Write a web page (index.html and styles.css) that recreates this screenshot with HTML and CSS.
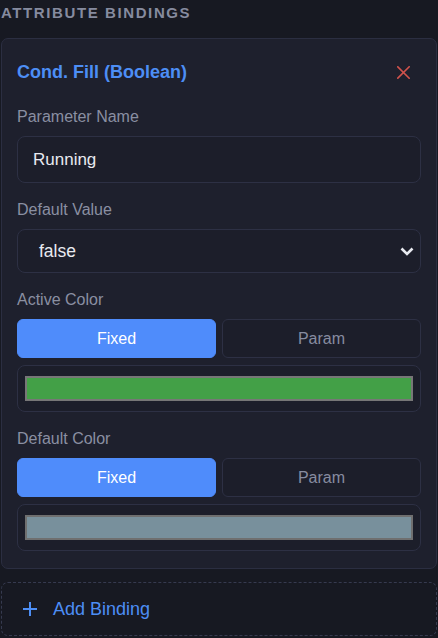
FILE: index.html
```html
<!DOCTYPE html>
<html lang="en">
<head>
<meta charset="utf-8">
<title>Attribute Bindings</title>
<link rel="stylesheet" href="styles.css">
</head>
<body>
<div class="panel">
  <h3 class="section-title">Attribute Bindings</h3>
  <div class="binding-card">
    <div class="card-header">
      <span class="card-title">Cond. Fill (Boolean)</span>
      <button class="remove-btn" aria-label="Remove binding">
        <svg width="13" height="13" viewBox="0 0 13 13"><path d="M0.8 0.8 L12.2 12.2 M12.2 0.8 L0.8 12.2" stroke="#d0524c" stroke-width="1.6" fill="none" stroke-linecap="square"/></svg>
      </button>
    </div>
    <div class="fields">
      <div class="field">
        <label class="field-label">Parameter Name</label>
        <div class="text-input">Running</div>
      </div>
      <div class="field">
        <label class="field-label">Default Value</label>
        <div class="select-input">
          <span>false</span>
          <svg width="14" height="9" viewBox="0 0 14 9"><path d="M1.5 1.5 L7 7 L12.5 1.5" stroke="#e8eaf0" stroke-width="2.6" fill="none"/></svg>
        </div>
      </div>
      <div class="field">
        <label class="field-label">Active Color</label>
        <div class="color-stack">
          <div class="toggle">
            <button class="toggle-btn active">Fixed</button>
            <button class="toggle-btn">Param</button>
          </div>
          <div class="swatch-box"><div class="swatch swatch-green"></div></div>
        </div>
      </div>
      <div class="field">
        <label class="field-label">Default Color</label>
        <div class="color-stack">
          <div class="toggle">
            <button class="toggle-btn active">Fixed</button>
            <button class="toggle-btn">Param</button>
          </div>
          <div class="swatch-box"><div class="swatch swatch-grey"></div></div>
        </div>
      </div>
    </div>
  </div>
  <button class="add-binding">
    <svg width="14" height="14" viewBox="0 0 14 14"><path d="M7 0 V14 M0 7 H14" stroke="#4d8ef5" stroke-width="2" fill="none"/></svg>
    <span>Add Binding</span>
  </button>
</div>
</body>
</html>
```
FILE: styles.css
```css
* { box-sizing: border-box; }
html, body {
  margin: 0;
  padding: 0;
  background: #171922;
  font-family: "Liberation Sans", Arial, sans-serif;
  overflow: hidden;
}
.panel {
  padding: 0 1px;
  width: 438px;
}
.section-title {
  margin: 0 0 16px 0;
  padding-top: 3px;
  font-size: 15px;
  line-height: 19px;
  font-weight: 700;
  letter-spacing: 1.6px;
  text-transform: uppercase;
  color: #868b9f;
}
.binding-card {
  width: 436px;
  background: #1e202d;
  border: 1px solid #2b2e41;
  border-radius: 7px;
  padding: 15px 15px 17px 15px;
}
.card-header {
  height: 36px;
  display: flex;
  align-items: center;
  justify-content: space-between;
  margin-bottom: 17px;
}
.card-title {
  color: #4d8ef5;
  font-size: 18px;
  font-weight: 700;
}
.remove-btn {
  width: 36px;
  height: 36px;
  border: 0;
  background: transparent;
  padding: 0;
  display: flex;
  align-items: center;
  justify-content: center;
}
.fields {
  display: flex;
  flex-direction: column;
  gap: 17px;
}
.field {
  display: flex;
  flex-direction: column;
}
.field-label {
  font-size: 16px;
  line-height: 20px;
  color: #8a8fa2;
  margin-bottom: 9px;
}
.text-input {
  height: 47px;
  border: 1px solid #2d3044;
  border-radius: 8px;
  background: #1c1e2a;
  padding: 0 15px;
  display: flex;
  align-items: center;
  color: #e8eaf0;
  font-size: 17px;
}
.select-input {
  height: 44px;
  border: 1px solid #2d3044;
  border-radius: 8px;
  background: #1c1e2a;
  padding: 0 6px 0 21px;
  display: flex;
  align-items: center;
  justify-content: space-between;
  color: #e8eaf0;
  font-size: 17.5px;
}
.color-stack {
  display: flex;
  flex-direction: column;
  gap: 7px;
}
.toggle {
  display: grid;
  grid-template-columns: 1fr 1fr;
  gap: 6px;
}
.toggle-btn {
  height: 39px;
  border-radius: 6px;
  border: 1px solid #2d3044;
  background: #1c1e2a;
  color: #878ca0;
  font-family: "Liberation Sans", Arial, sans-serif;
  font-size: 16px;
  padding: 0;
}
.toggle-btn.active {
  background: #4f8cfb;
  border-color: #4f8cfb;
  color: #ffffff;
}
.swatch-box {
  height: 47px;
  border: 1px solid #2d3044;
  border-radius: 8px;
  background: #1c1e2a;
  padding: 10px 7px;
}
.swatch {
  height: 25px;
  border: 2px solid #777777;
}
.swatch-green { background: #43a047; }
.swatch-grey { background: #78909c; border-color: #6f6f6f; }
.add-binding {
  margin-top: 13px;
  width: 436px;
  height: 54px;
  border: 1px dashed #363a4f;
  border-radius: 7px;
  background: transparent;
  display: flex;
  align-items: center;
  gap: 16px;
  padding: 0 0 0 21px;
  color: #4d8ef5;
  font-family: "Liberation Sans", Arial, sans-serif;
  font-size: 18px;
}
```
